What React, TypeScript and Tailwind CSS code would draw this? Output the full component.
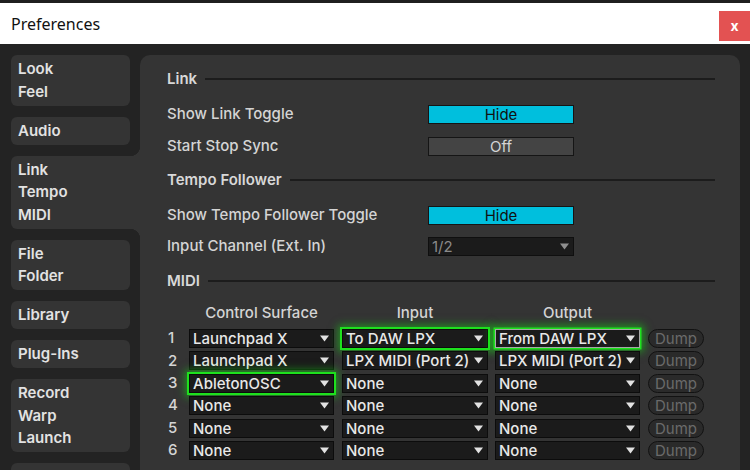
import React from 'react';

const FONT = { fontFamily: 'Inter, "Noto Sans", sans-serif' };

const Arrow = ({ color = '#e2e2e2' }: { color?: string }) => (
  <svg width="9" height="7" viewBox="0 0 9 7" className="shrink-0">
    <path d="M0 0.5h9L4.5 6.5z" fill={color} />
  </svg>
);

type Glow = 'none' | 'green' | 'greenGray';

const Dropdown: React.FC<{ text: string; width: string; glow?: Glow }> = ({ text, width, glow = 'none' }) => {
  const glowCls =
    glow === 'green'
      ? 'border-[#0c0c0c] shadow-[0_0_0_2px_#1ee01e,0_0_8px_4px_rgba(20,235,20,0.5)]'
      : glow === 'greenGray'
      ? 'border-[#a8a8a8] shadow-[0_0_0_1.5px_#1ee01e,0_0_8px_4px_rgba(20,235,20,0.5)]'
      : 'border-[#0c0c0c]';
  return (
    <div className={`${width} h-[19px] shrink-0 flex items-center justify-between bg-[#1b1b1b] border ${glowCls} pl-[3px] pr-[4px]`}>
      <span className="text-[15px] font-medium text-[#e8e8e8] leading-none whitespace-nowrap">{text}</span>
      <Arrow />
    </div>
  );
};

const SectionHeader = ({ title, className = '' }: { title: string; className?: string }) => (
  <div className={`flex items-center gap-[8px] h-[24px] ${className}`}>
    <span className="text-[15px] font-semibold text-[#d8d8d8]">{title}</span>
    <div className="flex-1 h-[2px] bg-[#1c1c1c]" />
  </div>
);

const Toggle = ({ text, on }: { text: string; on: boolean }) => (
  <div
    className={`w-[146px] h-[19px] flex items-center justify-center border border-[#151515] text-[15px] leading-none ${
      on ? 'bg-[#00bfdd] text-[#111]' : 'bg-[#444444] text-[#d4d4d4]'
    }`}
  >
    {text}
  </div>
);

const SettingRow: React.FC<{ label: string; className?: string; children: React.ReactNode }> = ({ label, className = '', children }) => (
  <div className={`flex items-center h-[19px] ${className}`}>
    <span className="w-[261px] text-[15px] font-medium text-[#d4d4d4]">{label}</span>
    {children}
  </div>
);

const midiRows: { cs: string; input: string; output: string; glow: [Glow, Glow, Glow] }[] = [
  { cs: 'Launchpad X', input: 'To DAW LPX', output: 'From DAW LPX', glow: ['none', 'green', 'greenGray'] },
  { cs: 'Launchpad X', input: 'LPX MIDI (Port 2)', output: 'LPX MIDI (Port 2)', glow: ['none', 'none', 'none'] },
  { cs: 'AbletonOSC', input: 'None', output: 'None', glow: ['green', 'none', 'none'] },
  { cs: 'None', input: 'None', output: 'None', glow: ['none', 'none', 'none'] },
  { cs: 'None', input: 'None', output: 'None', glow: ['none', 'none', 'none'] },
  { cs: 'None', input: 'None', output: 'None', glow: ['none', 'none', 'none'] },
];

const tabs: { lines: string[]; selected?: boolean }[] = [
  { lines: ['Look', 'Feel'] },
  { lines: ['Audio'] },
  { lines: ['Link', 'Tempo', 'MIDI'], selected: true },
  { lines: ['File', 'Folder'] },
  { lines: ['Library'] },
  { lines: ['Plug-Ins'] },
  { lines: ['Record', 'Warp', 'Launch'] },
];

export default function App() {
  return (
    <div className="w-[750px] h-[470px] overflow-hidden bg-[#232323]" style={FONT}>
      <div className="h-[3px] bg-[#1f1f1f]" />
      <div className="h-[41px] bg-white flex justify-between">
        <span
          className="pl-[11px] pt-[9px] text-[16px] text-[#111]"
          style={{ fontFamily: '"Noto Sans", "Open Sans", sans-serif' }}
        >
          Preferences
        </span>
        <div className="mt-[8px] w-[31px] h-[30px] bg-[#e35252] flex items-center justify-center text-white text-[14px] font-bold leading-none pb-[1px]">
          x
        </div>
      </div>

      <div className="flex h-[426px] pt-[11px]">
        {/* sidebar */}
        <div className="w-[140px] shrink-0 flex flex-col gap-[11px] pl-[11px]">
          {tabs.map((t, i) => (
            <div
              key={i}
              className={`relative bg-[#343434] px-[7px] pt-[3px] pb-[2.5px] ${
                t.selected ? 'w-[129px] rounded-l-[6px]' : 'w-[119px] rounded-[6px]'
              }`}
            >
              {t.lines.map((l) => (
                <div key={l} className="text-[15px] font-semibold leading-[22.5px] text-[#e2e2e2]">
                  {l}
                </div>
              ))}
              {t.selected && (
                <>
                  <div className="absolute right-0 top-[-10px] w-[10px] h-[10px] bg-[radial-gradient(circle_at_0_0,#232323_10px,#343434_10.5px)]" />
                  <div className="absolute right-0 bottom-[-10px] w-[10px] h-[10px] bg-[radial-gradient(circle_at_0_100%,#232323_10px,#343434_10.5px)]" />
                </>
              )}
            </div>
          ))}
          <div className="w-[119px] h-[40px] shrink-0 rounded-[6px] bg-[#343434]" />
        </div>

        {/* panel */}
        <div className="flex-1 mr-[10px] rounded-t-[10px] bg-[#343434] pl-[27px] pr-[25px] pt-[12px]">
          <SectionHeader title="Link" />
          <SettingRow label="Show Link Toggle" className="mt-[14px]">
            <Toggle text="Hide" on />
          </SettingRow>
          <SettingRow label="Start Stop Sync" className="mt-[13px]">
            <Toggle text="Off" on={false} />
          </SettingRow>

          <SectionHeader title="Tempo Follower" className="mt-[12px]" />
          <SettingRow label="Show Tempo Follower Toggle" className="mt-[14px]">
            <Toggle text="Hide" on />
          </SettingRow>
          <SettingRow label="Input Channel (Ext. In)" className="mt-[12px]">
            <div className="w-[146px] h-[19px] flex items-center justify-between bg-[#1b1b1b] border border-[#0f0f0f] pl-[3px] pr-[4px]">
              <span className="text-[15px] text-[#8a8a8a] leading-none">1/2</span>
              <Arrow color="#8f8f8f" />
            </div>
          </SettingRow>

          <SectionHeader title="MIDI" className="mt-[13px]" />

          <div className="flex items-center h-[20px] mt-[10px] text-[15px] font-medium text-[#d4d4d4]">
            <div className="w-[22px]" />
            <div className="w-[145px] text-center">Control Surface</div>
            <div className="w-[146px] ml-[8px] text-center">Input</div>
            <div className="w-[145px] ml-[7px] text-center">Output</div>
          </div>

          <div className="flex flex-col gap-[3.4px] mt-[6px]">
            {midiRows.map((r, i) => (
              <div key={i} className="flex items-center h-[19px]">
                <div className="w-[22px] pl-[1px] text-[15px] font-medium text-[#d4d4d4]">{i + 1}</div>
                <Dropdown text={r.cs} width="w-[145px]" glow={r.glow[0]} />
                <div className="ml-[8px]">
                  <Dropdown text={r.input} width="w-[146px]" glow={r.glow[1]} />
                </div>
                <div className="ml-[7px]">
                  <Dropdown text={r.output} width="w-[145px]" glow={r.glow[2]} />
                </div>
                <div className="ml-[8px] w-[56px] h-[19px] rounded-full border border-[#121212] bg-[#2a2a2a] flex items-center justify-center text-[15px] leading-none text-[#6a6a6a]">
                  Dump
                </div>
              </div>
            ))}
          </div>
        </div>
      </div>
    </div>
  );
}
